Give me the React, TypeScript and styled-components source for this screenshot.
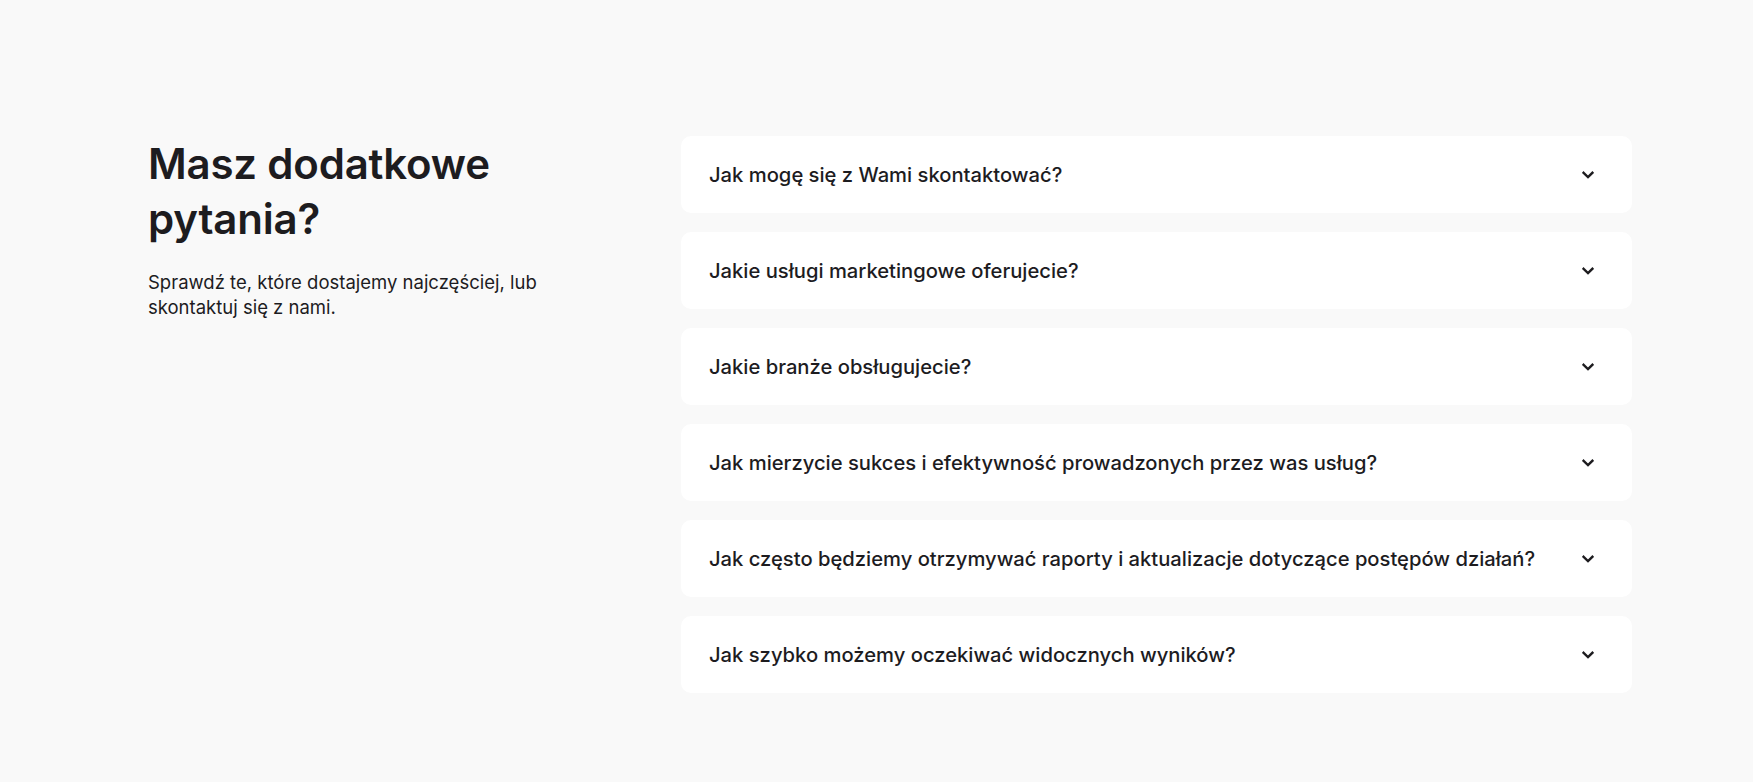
import * as React from 'react'
import styled, { createGlobalStyle } from 'styled-components'

const Global = createGlobalStyle`
  html, body {
    margin: 0;
    padding: 0;
    background: #f9f9f9;
  }
  body {
    font-family: 'Inter', 'Noto Sans', sans-serif;
    color: #1d1c1f;
  }
`

const Section = styled.section`
  display: flex;
  align-items: flex-start;
  padding: 136px 121px 87px 148px;
`

const Intro = styled.div`
  width: 533px;
  flex-shrink: 0;
`

const Heading = styled.h2`
  margin: 0;
  font-size: 42px;
  line-height: 55px;
  font-weight: 600;
  letter-spacing: -0.2px;
  color: #1d1c1f;
`

const Lead = styled.p`
  margin: 24px 0 0;
  width: 420px;
  font-size: 18.5px;
  line-height: 25px;
  font-weight: 400;
  color: #1d1c1f;
`

const List = styled.div`
  flex: 1;
  display: flex;
  flex-direction: column;
  gap: 19px;
`

const Item = styled.button`
  display: flex;
  align-items: center;
  justify-content: space-between;
  height: 77px;
  padding: 0 38px 0 28px;
  border: 0;
  border-radius: 10px;
  background: #ffffff;
  font-family: inherit;
  text-align: left;
  cursor: pointer;
`

const Question = styled.span`
  font-size: 20.2px;
  font-weight: 500;
  color: #1d1c1f;
`

const Chevron = () => (
  <svg width="12" height="8" viewBox="0 0 12 8" fill="none">
    <path d="M1.6 1.8 L6 6 L10.4 1.8" stroke="#1d1c1f" strokeWidth="2.4" strokeLinecap="square" />
  </svg>
)

const questions = [
  'Jak mogę się z Wami skontaktować?',
  'Jakie usługi marketingowe oferujecie?',
  'Jakie branże obsługujecie?',
  'Jak mierzycie sukces i efektywność prowadzonych przez was usług?',
  'Jak często będziemy otrzymywać raporty i aktualizacje dotyczące postępów działań?',
  'Jak szybko możemy oczekiwać widocznych wyników?',
]

export default function App() {
  return (
    <>
      <Global />
      <Section>
        <Intro>
          <Heading>
            Masz dodatkowe
            <br />
            pytania?
          </Heading>
          <Lead>Sprawdź te, które dostajemy najczęściej, lub skontaktuj się z nami.</Lead>
        </Intro>
        <List>
          {questions.map(q => (
            <Item key={q}>
              <Question>{q}</Question>
              <Chevron />
            </Item>
          ))}
        </List>
      </Section>
    </>
  )
}
